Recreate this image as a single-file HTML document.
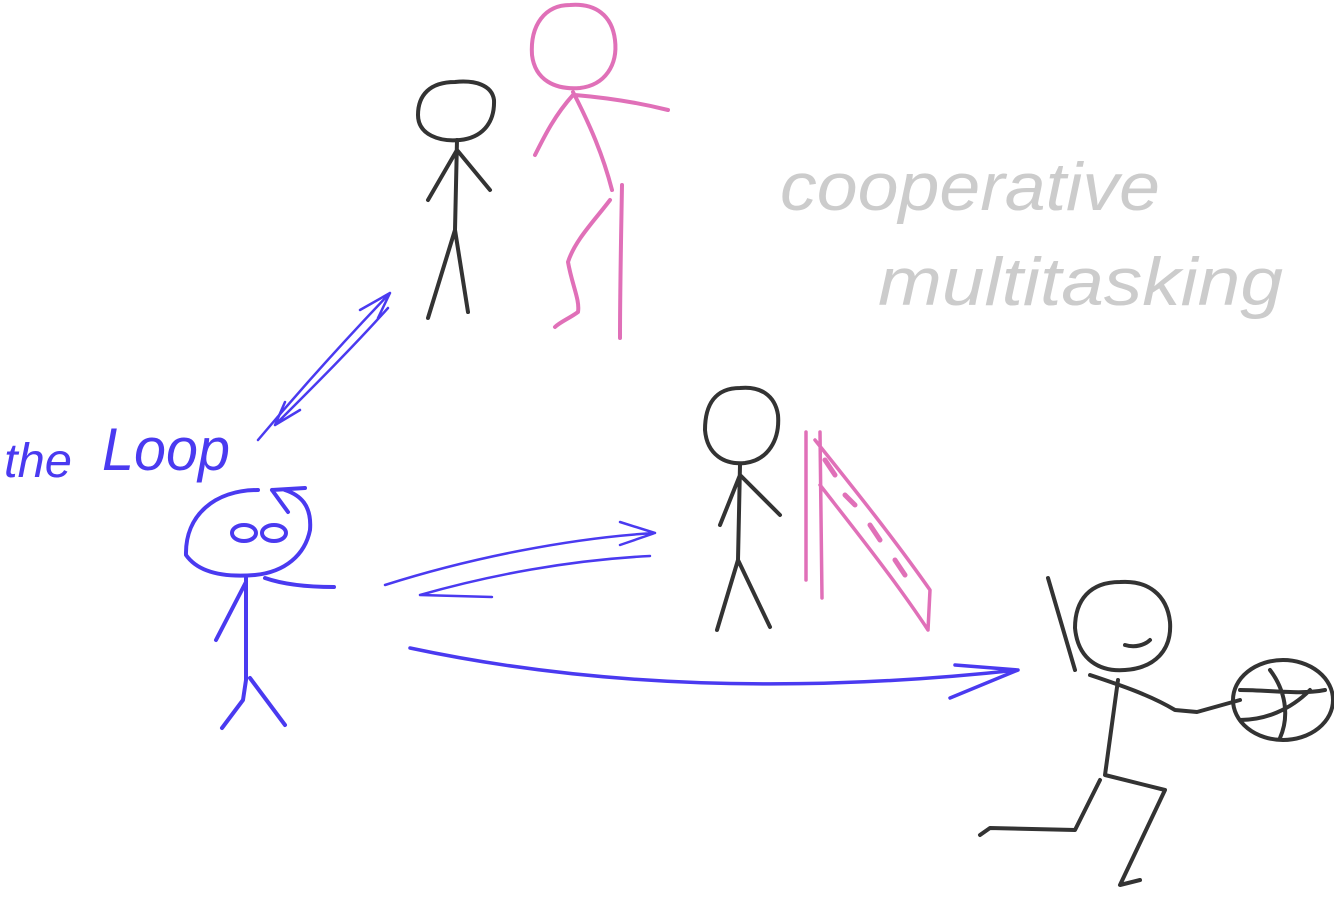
<!DOCTYPE html>
<html><head><meta charset="utf-8"><style>
html,body{margin:0;padding:0;background:#fff;width:1334px;height:900px;overflow:hidden}
svg{display:block}
</style></head><body>
<svg width="1334" height="900" viewBox="0 0 1334 900" xmlns="http://www.w3.org/2000/svg" fill="none" stroke-linecap="round" stroke-linejoin="round">
<!-- text -->
<text x="4" y="477" font-family="Liberation Sans, sans-serif" font-style="italic" font-size="48" fill="#4a3af0" textLength="68" lengthAdjust="spacingAndGlyphs">the</text>
<text x="102" y="470" font-family="Liberation Sans, sans-serif" font-style="italic" font-size="60" fill="#4a3af0" textLength="128" lengthAdjust="spacingAndGlyphs">Loop</text>
<text x="780" y="210" font-family="Liberation Sans, sans-serif" font-style="italic" font-size="68" fill="#cccccc" textLength="380" lengthAdjust="spacingAndGlyphs">cooperative</text>
<text x="878" y="305" font-family="Liberation Sans, sans-serif" font-style="italic" font-size="68" fill="#cccccc" textLength="405" lengthAdjust="spacingAndGlyphs">multitasking</text>

<!-- blue figure -->
<g stroke="#4a3af0" stroke-width="4">
<path d="M258 490 C215 490 185 515 186 555 C200 575 230 577 255 575 C285 572 305 555 310 530 C312 505 300 495 285 490"/>
<path d="M272 490 L305 488 M272 490 L288 512"/>
<ellipse cx="244" cy="533" rx="12" ry="8"/>
<ellipse cx="274" cy="533" rx="12" ry="8"/>
<path d="M265 578 C285 585 310 587 334 587"/>
<path d="M246 578 L246 680 L243 700 L222 728 M250 678 L285 725 M246 582 L216 640"/>
</g>
<!-- blue arrows -->
<g stroke="#4a3af0" stroke-width="2.5">
<path d="M258 440 C300 390 345 340 390 293 M360 310 L390 293 L378 318"/>
<path d="M275 425 C315 385 355 345 388 308 M275 425 L300 410 M275 425 L285 402"/>
<path d="M385 585 C470 558 570 538 655 533 M620 522 L655 533 L620 545"/>
<path d="M420 595 C490 575 570 560 650 556 M420 595 L492 597"/>
<path d="M410 648 C560 680 760 698 1018 670 M955 665 L1018 670 L950 698" stroke-width="3.5"/>
</g>
<!-- black figure 1 -->
<g stroke="#333" stroke-width="4">
<path d="M455 82 C430 82 418 95 418 115 C418 135 440 142 460 140 C480 138 495 125 494 100 C492 85 475 80 455 82Z"/>
<path d="M457 140 L455 230 L428 318 M455 230 L468 312 M457 150 L428 200 M457 150 L490 190"/>
</g>
<!-- pink figure -->
<g stroke="#e070b8" stroke-width="4">
<path d="M570 5 C545 5 530 25 532 55 C535 80 555 90 580 88 C605 85 618 65 615 40 C612 15 595 3 570 5Z"/>
<path d="M573 92 C590 125 603 155 612 190 M575 95 C610 98 640 103 668 110 M573 95 C555 115 545 135 535 155"/>
<path d="M622 185 C621 240 620 290 620 338 M610 200 C595 220 575 240 568 262 C572 285 580 300 578 312 C570 318 560 322 555 327"/>
</g>
<!-- black figure 2 -->
<g stroke="#333" stroke-width="4">
<path d="M740 388 C715 388 705 405 705 430 C707 455 725 465 745 463 C768 460 780 440 778 415 C775 395 760 386 740 388Z"/>
<path d="M740 465 L738 560 L717 630 M738 560 L770 627 M740 475 L720 525 M740 475 L780 515"/>
</g>
<!-- pink door -->
<g stroke="#e070b8" stroke-width="3.5">
<path d="M806 432 L806 580 M820 432 L822 598 M815 440 C855 490 895 540 930 590 L928 630 C895 580 855 530 820 485"/>
<path d="M825 460 L835 475 M845 495 L855 505 M870 525 L880 540 M895 560 L905 575" stroke-width="5"/>
</g>
<!-- black figure 3 -->
<g stroke="#333" stroke-width="4">
<path d="M1120 582 C1090 582 1075 600 1075 628 C1078 660 1100 672 1125 670 C1155 668 1172 650 1170 622 C1167 595 1148 580 1120 582Z"/>
<path d="M1125 645 C1135 648 1145 645 1150 640"/>
<path d="M1048 578 L1075 670 M1090 675 C1120 685 1150 695 1175 710 L1197 712 L1240 700"/>
<ellipse cx="1283" cy="700" rx="50" ry="40"/>
<path d="M1240 690 C1270 690 1300 695 1325 690 M1270 670 C1285 690 1290 715 1280 738 M1240 720 C1265 720 1290 710 1310 690"/>
<path d="M1118 680 L1105 775 L1165 790 L1120 885 L1140 880 M1100 780 L1075 830 L990 828 L980 835"/>
</g>
</svg>
</body></html>
